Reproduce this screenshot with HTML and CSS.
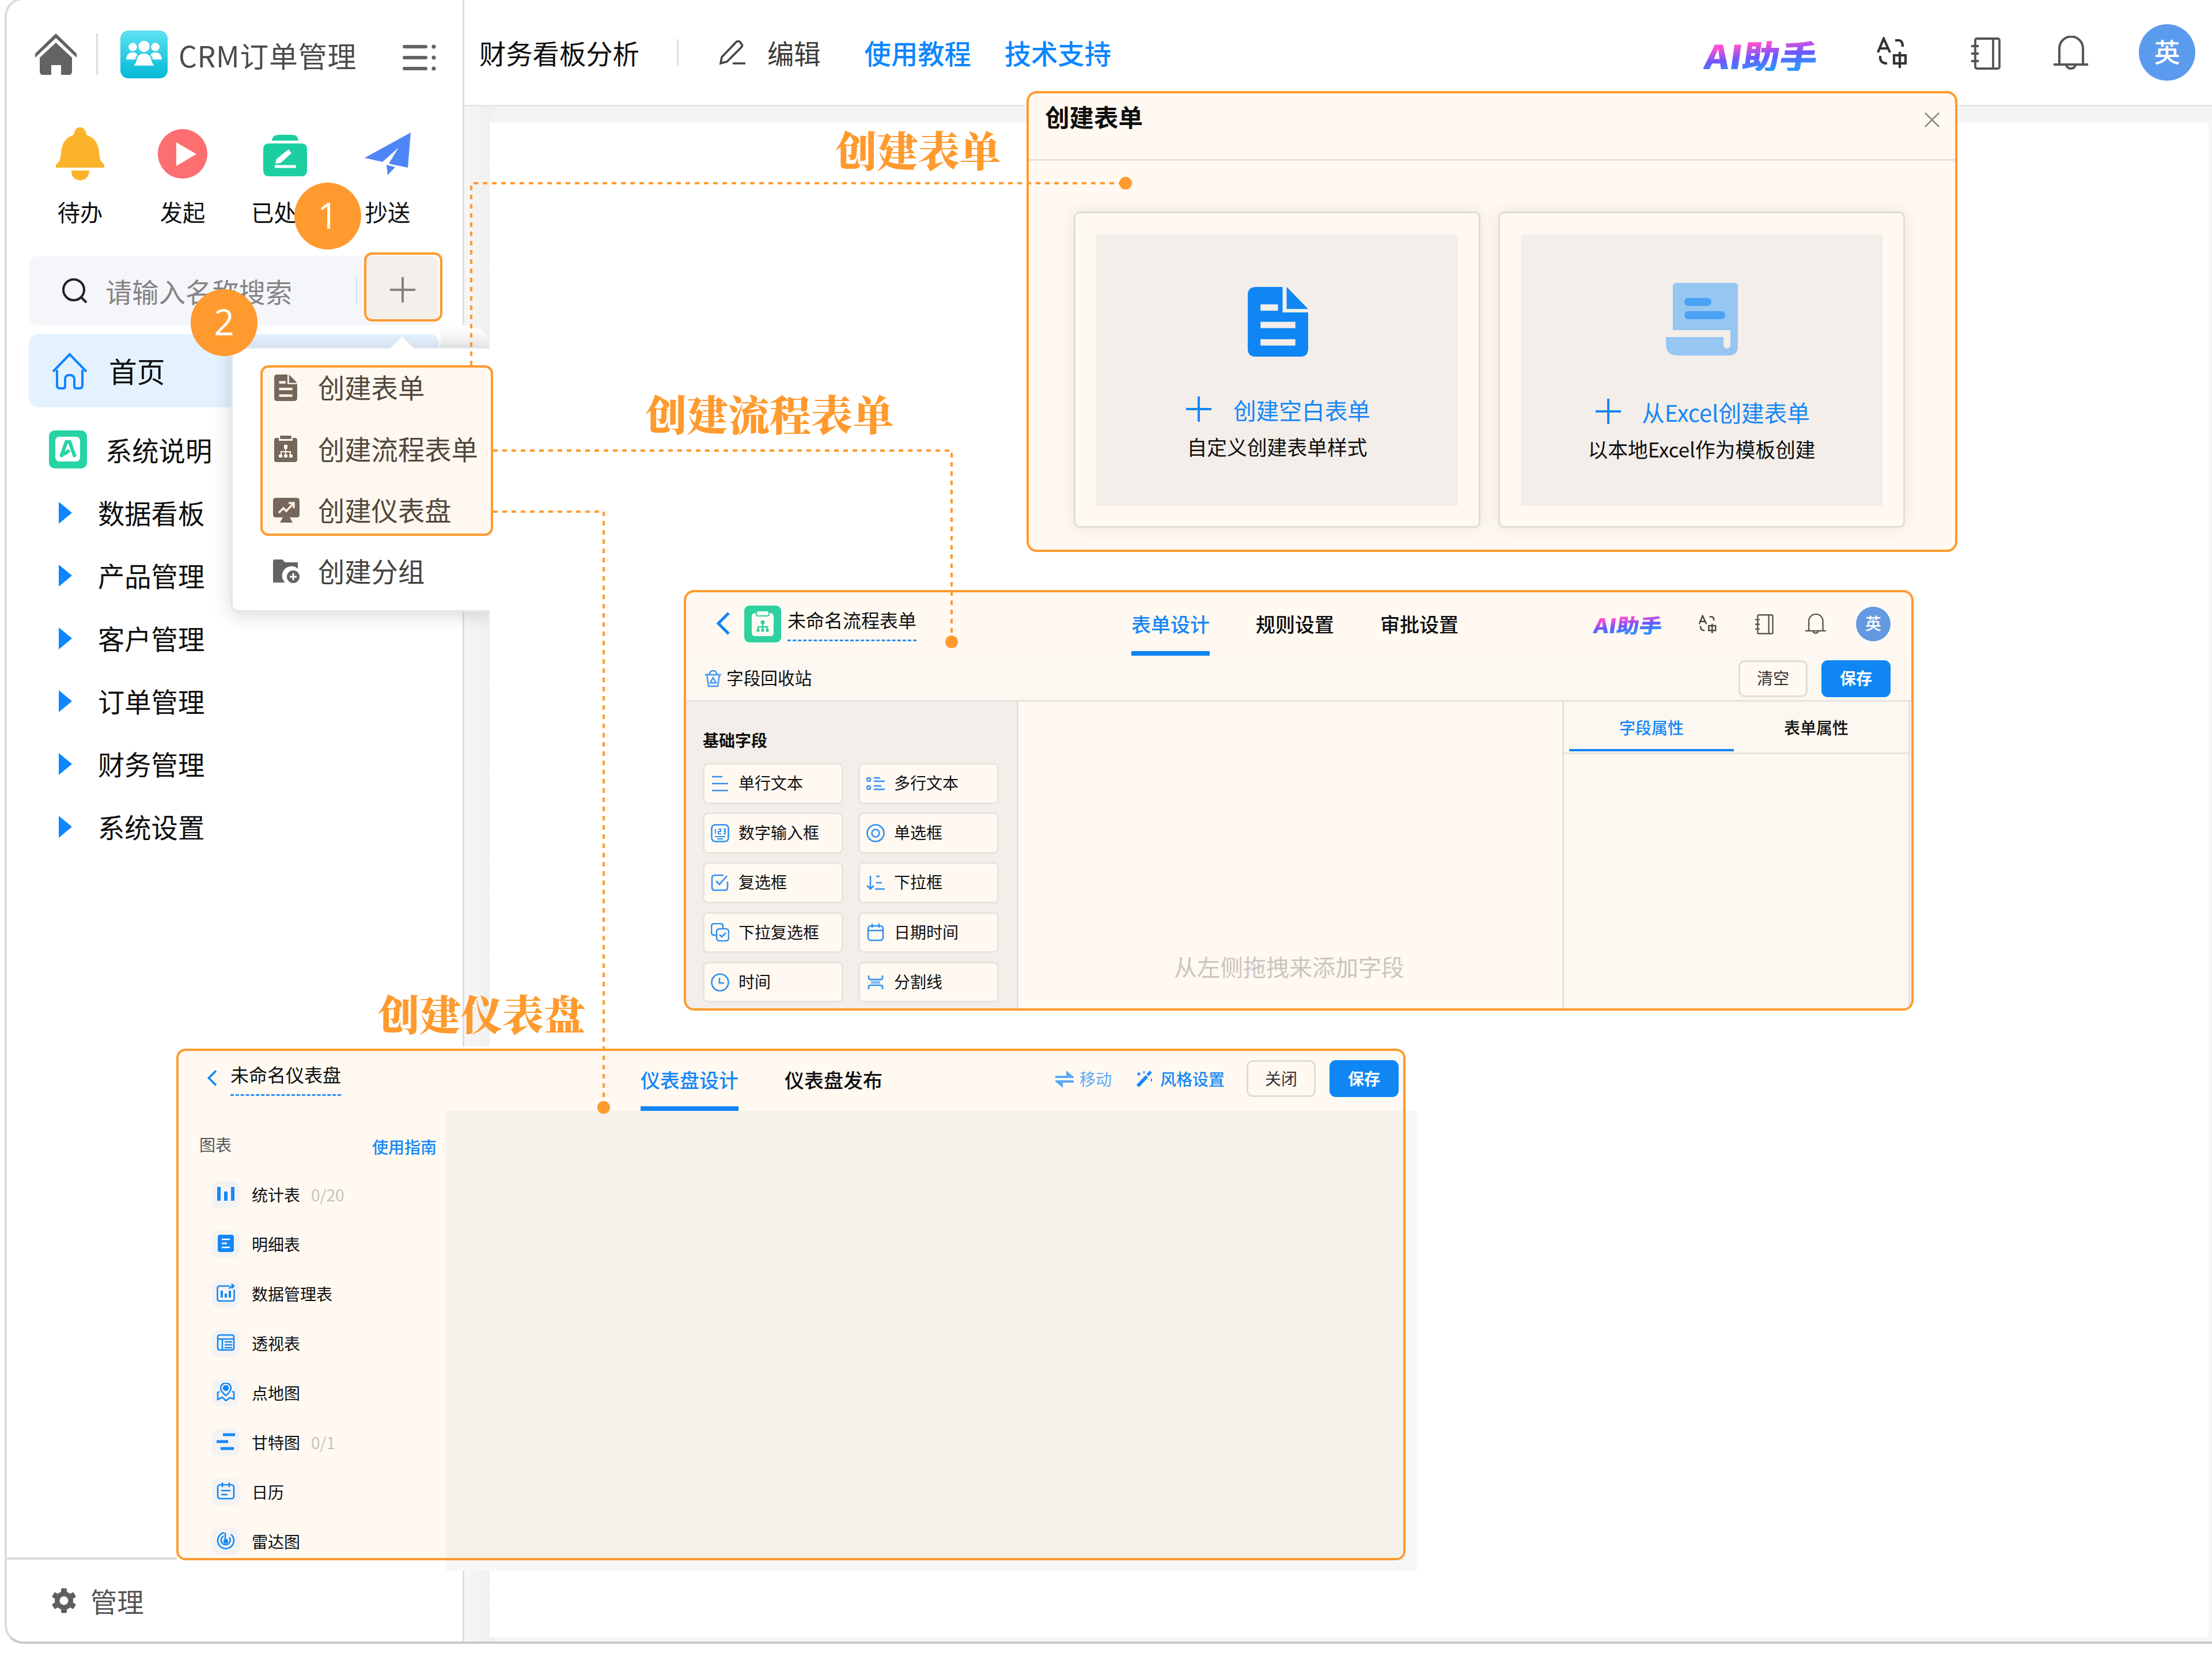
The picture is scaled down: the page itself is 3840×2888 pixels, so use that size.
FILE: index.html
```html
<!DOCTYPE html>
<html lang="zh-CN">
<head>
<meta charset="utf-8">
<title>CRM订单管理</title>
<link rel="stylesheet" href="styles.css">
</head>
<body>
<svg class="defs" width="0" height="0">
  <symbol id="i-home-solid" viewBox="0 0 72 72"><path d="M36 0 L72 35 V42 L36 8 L0 42 V35 Z"/><path d="M36 16 L64 42 V66 Q64 72 58 72 H45 V55 H28 V72 H14 Q8 72 8 66 V42 Z"/></symbol>
  <symbol id="i-list" viewBox="0 0 58 46"><path d="M3 4H40M3 23H40M3 42H40" stroke="currentColor" stroke-width="6" stroke-linecap="round"/><circle cx="54" cy="4" r="3.6"/><circle cx="54" cy="23" r="3.6"/><circle cx="54" cy="42" r="3.6"/></symbol>
  <symbol id="i-file" viewBox="0 0 104 120"><path fill-rule="evenodd" d="M14 0H60V44H104V106Q104 120 90 120H14Q0 120 0 106V14Q0 0 14 0ZM22 30V41H52V30ZM22 60V71H82V60ZM22 90V101H82V90Z"/><path d="M67 0L104 38H67Z"/></symbol>
  <symbol id="i-flow" viewBox="0 0 40 46"><path fill-rule="evenodd" d="M8 4V9H32V4H36Q40 4 40 8V42Q40 46 36 46H4Q0 46 0 42V8Q0 4 4 4ZM17 16V23H19V27H11V33H8V38H14V33H13V29H19V33H17V38H23V33H21V29H27V33H26V38H32V33H29V27H21V23H23V16Z"/><rect x="10" y="0" width="20" height="6" rx="2"/></symbol>
  <symbol id="i-board" viewBox="0 0 46 44"><path d="M5 0H41Q46 0 46 5V29Q46 34 41 34H29L34 43H12L17 34H5Q0 34 0 29V5Q0 0 5 0Z"/><path d="M10 26L18 18L23 23L35 10M27 9H36V18" fill="none" stroke="#fff9f2" stroke-width="3.4"/></symbol>
  <symbol id="i-folder" viewBox="0 0 46 42"><path d="M0 3Q0 0 3 0H16L21 5H43V16A14 14 0 0 0 21 40H0Z"/><circle cx="35" cy="30" r="11"/><path d="M35 24V36M29 30H41" stroke="#fff" stroke-width="3"/></symbol>
  <symbol id="i-translate" viewBox="0 0 52 54"><g fill="none" stroke="currentColor" stroke-width="4.2"><path d="M2 27L12 3L23 27M5 20H20"/><path d="M32 6H38Q45 6 45 17"/><path d="M6 33V37Q7 46 18 46"/><path d="M30 32H50V46H30ZM40 26V54"/></g></symbol>
  <symbol id="i-book" viewBox="0 0 52 56"><g fill="none" stroke="currentColor" stroke-width="3.8"><rect x="8" y="2" width="42" height="52" rx="3"/><path d="M39 2V54M1 15H14M1 28H14M1 41H14"/></g></symbol>
  <symbol id="i-bell" viewBox="0 0 60 62"><g fill="none" stroke="currentColor" stroke-width="4"><path d="M10 50V22A20 20 0 0 1 51 22V50M0 50H60M22 51A8.5 9 0 0 0 38 51"/></g></symbol>
  <symbol id="i-plus" viewBox="0 0 44 44"><path d="M22 0V44M0 22H44" stroke="currentColor" stroke-width="4"/></symbol>
  <symbol id="i-back" viewBox="0 0 24 40"><path d="M22 2L4 20L22 38" fill="none" stroke="currentColor" stroke-width="5"/></symbol>
</svg>

<div class="app">
  <aside class="sidebar">
    <header class="brand">
      <svg class="brand-home"><use href="#i-home-solid"/></svg>
      <span class="brand-line"></span>
      <span class="brand-logo"><svg viewBox="0 0 60 48" width="62" height="50" fill="#fff"><circle cx="11" cy="12" r="7"/><circle cx="49" cy="12" r="7"/><path d="M0 33Q1 21 11 21Q17 21 19 25Q16 28 15 33ZM60 33Q59 21 49 21Q43 21 41 25Q44 28 45 33Z"/><circle cx="30" cy="11" r="9.5"/><path d="M13 43Q17 39 18 32Q20 23 30 23Q40 23 42 32Q43 39 47 43Z"/></svg></span>
      <span class="brand-name">CRM订单管理</span>
      <svg class="brand-menu"><use href="#i-list"/></svg>
    </header>
    <nav class="quick">
      <a class="quick-item"><span class="quick-icon"><svg viewBox="0 0 86 92" width="86" height="92" fill="#fbb429"><path d="M43 0C50 0 53 6 54 13C68 18 75 28 76 44C77 57 79 59 85 65V70H1V65C7 59 9 57 10 44C11 28 18 18 32 13C33 6 36 0 43 0Z"/><path d="M28 75H59Q58 91 43 92Q28 91 28 75Z"/></svg></span>待办</a>
      <a class="quick-item"><span class="quick-icon"><svg viewBox="0 0 86 86" width="86" height="86"><circle cx="43" cy="43" r="43" fill="#fd6e71"/><path d="M32 23L67 43.500L32 64Z" fill="#fff"/></svg></span>发起</a>
      <a class="quick-item"><span class="quick-icon quick-low"><svg viewBox="0 0 76 72" width="76" height="72"><path d="M15 10Q16 0 26 0H50Q60 0 61 10ZM10 15H66Q76 15 76 25V62Q76 72 66 72H10Q0 72 0 62V25Q0 15 10 15Z" fill="#1ccfa0"/><path d="M20 55H57" stroke="#fff" stroke-width="5"/><path d="M44 25L49 32L30 49L21 50L23 42Z" fill="#fff"/></svg></span>已处理</a>
      <a class="quick-item"><span class="quick-icon"><svg viewBox="0 0 80 74" width="80" height="74" fill="#4e86f7"><path d="M80 0L75 61L42 54L59 26L31 51L0 44Z"/><path d="M38 56L53 60L40 74Z"/></svg></span>抄送</a>
    </nav>
    <div class="search">
      <svg viewBox="0 0 44 44" width="44" height="44"><circle cx="20" cy="20" r="18" fill="none" stroke="#222" stroke-width="4"/><path d="M32 32L42 42" stroke="#222" stroke-width="4"/></svg>
      <span class="search-text">请输入名称搜索</span>
      <span class="search-line"></span>
    </div>
    <a class="home-row">
      <svg viewBox="0 0 62 64" width="62" height="64" fill="none" stroke="#0d86ff" stroke-width="4"><path d="M2 33L31 3L60 33M9 30V57Q9 62 14 62H20Q23 62 23 58V46Q23 39 31 39Q39 39 39 46V58Q39 62 42 62H48Q53 62 53 57V30"/></svg>首页</a>
    <nav class="tree">
      <a class="tree-row tree-doc"><span class="doc-icon"><svg viewBox="0 0 66 66" width="66" height="66"><rect x="11" y="11" width="43" height="43" rx="7" fill="#fff"/><path d="M21 46L30 20H36L45 46M24 41Q31 40 35 34" fill="none" stroke="#26d3a5" stroke-width="6"/></svg></span>系统说明</a>
      <a class="tree-row"><i class="caret"></i>数据看板</a>
      <a class="tree-row"><i class="caret"></i>产品管理</a>
      <a class="tree-row"><i class="caret"></i>客户管理</a>
      <a class="tree-row"><i class="caret"></i>订单管理</a>
      <a class="tree-row"><i class="caret"></i>财务管理</a>
      <a class="tree-row"><i class="caret"></i>系统设置</a>
    </nav>
    <footer class="manage">
      <svg viewBox="-22 -22 44 44" width="44" height="44"><g fill="#5f5f5f"><circle r="16"/><rect x="-5" y="-21.500" width="10" height="43" rx="2"/><rect x="-5" y="-21.500" width="10" height="43" rx="2" transform="rotate(60)"/><rect x="-5" y="-21.500" width="10" height="43" rx="2" transform="rotate(120)"/></g><circle r="7.500" fill="#fff"/></svg>管理</footer>
  </aside>
  <main class="main">
    <header class="topbar">
      <span class="top-title">财务看板分析</span>
      <span class="top-line"></span>
      <svg class="top-pen" viewBox="0 0 46 44" width="46" height="44" fill="none" stroke="#444" stroke-width="3.600"><path d="M3 41L5 30L30 4Q33 1 37 4L39 7Q42 10 39 13L14 38L3 41ZM24 41H46"/></svg>
      <span class="top-edit">编辑</span>
      <a class="top-link top-guide">使用教程</a>
      <a class="top-link top-help">技术支持</a>
      <span class="ai">AI助手</span>
      <svg class="tool-translate"><use href="#i-translate"/></svg>
      <svg class="tool-book"><use href="#i-book"/></svg>
      <svg class="tool-bell"><use href="#i-bell"/></svg>
      <span class="avatar">英</span>
    </header>
    <div class="canvas"></div>
  </main>
</div>

<div class="tab-bump"></div>
<div class="menu">
  <svg class="menu-arrow" viewBox="0 0 44 22" width="44" height="22"><path d="M0 22L22 0L44 22Z" fill="#fff"/></svg>
  <a class="menu-row"><svg class="mi-doc"><use href="#i-file"/></svg>创建表单</a>
  <a class="menu-row"><svg class="mi-doc"><use href="#i-flow"/></svg>创建流程表单</a>
  <a class="menu-row"><svg class="mi-wide"><use href="#i-board"/></svg>创建仪表盘</a>
  <a class="menu-row menu-gray"><svg class="mi-wide"><use href="#i-folder"/></svg>创建分组</a>
</div>
<div class="mark mark-menu"></div>
<div class="mark mark-plus"><svg width="44" height="44"><use href="#i-plus"/></svg></div>
<span class="badge badge-1">1</span>
<span class="badge badge-2">2</span>

<section class="panel form-panel">
  <header class="form-head"><h2>创建表单</h2><svg viewBox="0 0 26 26" width="26" height="26"><path d="M1 1L25 25M25 1L1 25" stroke="#8d8983" stroke-width="2.600"/></svg></header>
  <div class="cards">
    <div class="card"><div class="card-in">
      <svg class="card-file"><use href="#i-file"/></svg>
      <p class="card-link"><svg width="44" height="44"><use href="#i-plus"/></svg>创建空白表单</p>
      <p class="card-desc">自定义创建表单样式</p>
    </div></div>
    <div class="card card-excel"><div class="card-in">
      <svg class="card-sheet" viewBox="0 0 125 126"><path d="M18 0H119Q125 0 125 6V110Q125 126 109 126H20Q0 126 0 106V94H100V108Q101 113 106 114Q112 113 112 108V82H12V6Q12 0 18 0Z" fill="#97c6f3"/><rect x="32" y="26" width="47" height="14" rx="7" fill="#4aa2f5"/><rect x="32" y="49" width="71" height="14" rx="7" fill="#4aa2f5"/></svg>
      <p class="card-link"><svg width="44" height="44"><use href="#i-plus"/></svg>从Excel创建表单</p>
      <p class="card-desc">以本地Excel作为模板创建</p>
    </div></div>
  </div>
</section>

<section class="panel flow-panel">
  <header class="flow-head">
    <svg class="flow-back"><use href="#i-back"/></svg>
    <span class="flow-logo"><svg viewBox="0 0 64 64" width="64" height="64"><path d="M19 13H45Q51 13 51 19V47Q51 53 45 53H19Q13 53 13 47V19Q13 13 19 13Z" fill="#fffaf2"/><rect x="21" y="9" width="22" height="9" rx="3" fill="#fffaf2" stroke="#2fd1a0" stroke-width="2"/><path d="M32 28V43M24 43V37H40V43" fill="none" stroke="#2fd1a0" stroke-width="2.600"/><circle cx="32" cy="29" r="3.500" fill="#2fd1a0"/><circle cx="24" cy="43" r="2.800" fill="#2fd1a0"/><circle cx="32" cy="43" r="2.800" fill="#2fd1a0"/><circle cx="40" cy="43" r="2.800" fill="#2fd1a0"/></svg></span>
    <span class="doc-name">未命名流程表单</span>
    <nav class="tabs flow-tabs"><a class="tab tab-on">表单设计</a><a class="tab">规则设置</a><a class="tab">审批设置</a></nav>
    <span class="ai ai-small">AI助手</span>
    <svg class="st-translate"><use href="#i-translate"/></svg>
    <svg class="st-book"><use href="#i-book"/></svg>
    <svg class="st-bell"><use href="#i-bell"/></svg>
    <span class="avatar avatar-small">英</span>
  </header>
  <div class="flow-tool">
    <svg viewBox="0 0 28 30" width="28" height="30" fill="none" stroke="#3f98f3" stroke-width="2.400"><path d="M0 8H28M3 8L6 28H22L25 8M7 8Q9 1 14 1Q19 1 21 8M14 13L19 22H9Z"/></svg>
    <span class="flow-recycle">字段回收站</span>
    <button class="btn">清空</button><button class="btn btn-blue">保存</button>
  </div>
  <div class="flow-body">
    <aside class="fields">
      <h3>基础字段</h3>
      <div class="field-grid">
        <span class="field"><svg viewBox="0 0 32 32"><path d="M2 4H20M2 16H30M2 28H30"/></svg>单行文本</span>
        <span class="field"><svg viewBox="0 0 32 32"><circle cx="4" cy="9" r="3"/><circle cx="4" cy="23" r="3"/><path d="M13 6H24M13 12H32M13 20H26M13 26H32"/></svg>多行文本</span>
        <span class="field"><svg viewBox="0 0 32 32"><rect x="1.500" y="1.500" width="29" height="29" rx="6"/><path d="M8 9V17M13 9H17V13H13V17H18M22 9H25V17H22M22 13H25M7 22H25M11 26H21" stroke-width="2"/></svg>数字输入框</span>
        <span class="field"><svg viewBox="0 0 32 32"><circle cx="16" cy="16" r="14.500"/><circle cx="16" cy="16" r="6.500"/></svg>单选框</span>
        <span class="field"><svg viewBox="0 0 32 32"><path d="M22 3H7Q2 3 2 8V24Q2 29 7 29H24Q29 29 29 24V14M9 13L15 19L28 4"/></svg>复选框</span>
        <span class="field"><svg viewBox="0 0 32 32"><path d="M7 4V27M1 21L7 27L13 21M17 5H23M17 16H27M15 27H32"/></svg>下拉框</span>
        <span class="field"><svg viewBox="0 0 32 32"><path d="M9 21H6Q1 21 1 16V6Q1 1 6 1H16Q21 1 21 6V9"/><rect x="10" y="10" width="21" height="21" rx="5"/><path d="M15 20L19 24L26 17"/></svg>下拉复选框</span>
        <span class="field"><svg viewBox="0 0 32 32"><rect x="3" y="5" width="26" height="25" rx="5"/><path d="M3 13H29M10 1V8M22 1V8"/></svg>日期时间</span>
        <span class="field"><svg viewBox="0 0 32 32"><circle cx="16" cy="16" r="14.500"/><path d="M15 8V17H23"/></svg>时间</span>
        <span class="field"><svg viewBox="0 0 32 32"><path d="M4 4V8Q4 11 7 11H25Q28 11 28 8V4M4 28V24Q4 21 7 21H25Q28 21 28 24V28"/><path d="M8 16H24" stroke-width="5" opacity=".6"/></svg>分割线</span>
      </div>
    </aside>
    <div class="drop">从左侧拖拽来添加字段</div>
    <aside class="props"><div class="prop-tabs"><a class="prop-on">字段属性</a><a>表单属性</a></div></aside>
  </div>
</section>

<div class="dash-base"></div>
<section class="panel dash-panel">
  <header class="dash-head">
    <svg class="dash-back"><use href="#i-back"/></svg>
    <span class="doc-name">未命名仪表盘</span>
    <nav class="tabs dash-tabs"><a class="tab tab-on">仪表盘设计</a><a class="tab">仪表盘发布</a></nav>
    <a class="dash-move"><svg viewBox="0 0 32 30" width="32" height="30"><path d="M0 9H19V0L32 11V13H0ZM32 21H13V30L0 19V17H32Z" fill="#5aa9f6"/></svg>移动</a>
    <a class="dash-style"><svg viewBox="0 0 30 30" width="30" height="30"><path d="M3 27L19 10" stroke="#1788f5" stroke-width="6"/><path d="M20 8L26 2" stroke="#1788f5" stroke-width="5"/><path d="M5 3V9M2 6H8M14 1V5M27 14V19" stroke="#1788f5" stroke-width="2"/></svg>风格设置</a>
    <button class="btn">关闭</button><button class="btn btn-blue">保存</button>
  </header>
  <div class="dash-body">
    <aside class="charts">
      <div class="charts-head"><span>图表</span><a>使用指南</a></div>
      <div class="chart"><span class="chart-icon"><svg viewBox="0 0 32 32"><path d="M4 4V28M16 12V28M28 4V28" stroke-width="6"/></svg></span>统计表<em>0/20</em></div>
      <div class="chart"><span class="chart-icon"><svg viewBox="0 0 32 32"><rect x="2" y="1" width="28" height="30" rx="4" fill="#1687f5" stroke="none"/><path d="M9 9H23M9 16H18M9 23H23" stroke="#fff"/></svg></span>明细表</div>
      <div class="chart"><span class="chart-icon"><svg viewBox="0 0 32 32"><path d="M22 4H5Q1.500 4 1.500 8V26Q1.500 30 5 30H27Q30.500 30 30.500 26V10M22 9Q23 4 29 4M26 0L30 4L26 8"/><path d="M9 12V24M16 17V24M23 12V24" stroke-width="4"/></svg></span>数据管理表</div>
      <div class="chart"><span class="chart-icon"><svg viewBox="0 0 32 32"><rect x="2" y="3" width="28" height="26" rx="3"/><path d="M2 10H30M10 10V29M14 15H27M14 20H27M14 25H27"/></svg></span>透视表</div>
      <div class="chart"><span class="chart-icon"><svg viewBox="0 0 32 32"><path d="M16 22Q7 15 7 9A9 8.500 0 0 1 25 9Q25 15 16 22ZM5 15L2 17V29L10 25L16 31L23 26L30 28V16L27 15"/><circle cx="16" cy="9" r="4" fill="#1687f5"/></svg></span>点地图</div>
      <div class="chart"><span class="chart-icon"><svg viewBox="0 0 32 32"><path d="M11 4H32M0 16H20M7 28H30" stroke-width="5"/></svg></span>甘特图<em>0/1</em></div>
      <div class="chart"><span class="chart-icon"><svg viewBox="0 0 32 32"><rect x="2" y="5" width="28" height="24" rx="4"/><path d="M10 1V9M22 1V9M8 15H24M8 22H19"/></svg></span>日历</div>
      <div class="chart"><span class="chart-icon"><svg viewBox="0 0 32 32"><path d="M13 2A14 14 0 1 0 25 5M15 2V15M12 8A8 8 0 1 0 22 10"/><circle cx="16" cy="17" r="3" fill="#1687f5"/></svg></span>雷达图</div>
    </aside>
    <div class="dash-canvas"></div>
  </div>
</section>

<svg class="wires" viewBox="0 0 3840 2888">
  <g fill="none" stroke="#ff9a2e" stroke-width="4" stroke-dasharray="8 8">
    <path d="M818 634V318H1946"/>
    <path d="M856 782H1652V1106"/>
    <path d="M856 888H1048V1914"/>
  </g>
  <g fill="#ff9a2e"><circle cx="1954" cy="318" r="11"/><circle cx="1652" cy="1114" r="11"/><circle cx="1048" cy="1922" r="11"/></g>
</svg>
<span class="note note-form">创建表单</span>
<span class="note note-flow">创建流程表单</span>
<span class="note note-dash">创建仪表盘</span>
</body>
</html>
```
FILE: styles.css
```css
* { box-sizing: border-box; }
body {
  margin: 0; width: 3840px; height: 2888px; position: relative; overflow: hidden;
  background: #fff; color: #0e0e0e;
  font-family: "Noto Sans CJK SC", "Noto Sans", sans-serif; font-size: 46.3px; line-height: 1.2;
}
h2, h3, p { margin: 0; }
svg { flex: none; display: block; }
svg:not([fill]) { fill: currentColor; }
.defs { position: absolute; }

/* application frame */
.app {
  display: flex; height: 2857px; margin: -4px 0 0 8px;
  border: 4px solid #dcdcdc; border-bottom-color: #cacaca; border-right: 0;
  border-radius: 32px 0 0 32px; overflow: hidden; background: #fff;
}
.sidebar { width: 794px; flex: none; border-right: 3px solid #dedede; display: flex; flex-direction: column; }
.brand { display: flex; align-items: center; height: 188px; padding: 0 46px 0 49px; color: #636363; }
.brand-home { width: 72px; height: 72px; }
.brand-line { width: 3px; height: 72px; margin-left: 34px; background: #dcdcdc; }
.brand-logo {
  width: 82px; height: 83px; margin-left: 39px; border-radius: 14px;
  background: linear-gradient(#5de2f3, #05b8d7); display: flex; align-items: center; justify-content: center;
}
.brand-name { margin: 2px 0 0 19px; font-size: 50px; letter-spacing: .7px; color: #4c4c4c; white-space: nowrap; }
.brand-menu { width: 58px; height: 46px; margin: 11px 0 0 auto; }

.quick { display: grid; grid-template-columns: repeat(4, 178px); padding: 30px 0 0 38px; }
.quick-item { display: flex; flex-direction: column; align-items: center; font-size: 39.3px; line-height: 56px; }
.quick-icon { height: 95px; margin-bottom: 26px; display: flex; align-items: center; padding-top: 2px; }
.quick-low { padding-top: 9px; }

.search { height: 119px; margin: 50px 42px 0 38px; padding: 0 0 0 58px; display: flex; align-items: center; background: #f5f6fa; border-radius: 14px; }
.search-text { margin-left: 31px; color: #848484; }
.search-line { width: 2px; height: 48px; margin-left: 111px; background: #dcdfe6; }

.home-row { height: 127px; margin: 16px 41px 0 38px; padding-left: 40px; display: flex; align-items: center; gap: 37px; font-size: 48.8px; background: #e4f2ff; border-radius: 16px; }
.tree { margin-top: 18px; }
.tree-row { height: 109px; display: flex; align-items: center; padding-left: 90px; }
.tree-doc { padding-left: 73px; gap: 32px; }
.doc-icon { border-radius: 10px; background: #26d3a5; }
.caret { border: 19px solid transparent; border-left: 23px solid #0d86ff; border-right: 0; margin: 3px 45px 0 0; }
.manage { height: 146px; margin-top: auto; padding-left: 77px; display: flex; align-items: center; gap: 24px; color: #555; border-top: 4px solid #dedede; }

.main { flex: 1; display: flex; flex-direction: column; background: linear-gradient(90deg, #f7f7f7, #f0f0f0 43px, #f5f5f5 60px); }
.topbar { height: 185px; flex: none; display: flex; align-items: center; padding: 0 29px 0 26px; background: #fff; border-bottom: 3px solid #e6e6e6; white-space: nowrap; }
.top-title { width: 278px; }
.top-line { width: 3px; height: 46px; margin-left: 65px; background: #dcdfe6; }
.top-pen { margin-left: 70px; }
.top-edit { margin-left: 38px; color: #3c3c3c; }
.top-link { color: #0d86ff; font-weight: 500; }
.top-guide { margin-left: 76px; }
.top-help { margin-left: 58px; }
.ai {
  width: 200px; margin: 7px -3px 0 auto; font-size: 65px; font-weight: 900; line-height: 64px; white-space: nowrap;
  color: transparent; background: linear-gradient(172deg, #ff4fd2 24%, #6a58ff 54%, #2f93ff 82%);
  -webkit-background-clip: text; background-clip: text; transform: skewX(-8deg) scaleY(.88);
}
.tool-translate { width: 52px; height: 54px; margin-left: 101px; color: #333; }
.tool-book { width: 52px; height: 56px; margin-left: 111px; margin-top: 4px; color: #555; }
.tool-bell { width: 60px; height: 62px; margin-left: 92px; margin-top: 4px; color: #555; }
.avatar { width: 98px; height: 98px; margin-left: 88px; border-radius: 50%; background: #5b9bee; color: #fff; font-size: 45px; font-weight: 500; line-height: 94px; text-align: center; }
.canvas { flex: 1; margin: 27px 6px 8px 44px; background: #fff; }

/* create menu */
.tab-bump { position: absolute; left: 765px; top: 564px; width: 85px; height: 44px; background: linear-gradient(#fff, #efefef); border-radius: 0 48px 0 0 / 0 30px 0 0; }
.menu {
  position: absolute; left: 401px; top: 602px; width: 449px; height: 460px; padding: 13px 0 0 72px;
  background: #fff; border: 3px solid #e2e6ee; border-right: 0; border-radius: 12px 0 0 12px;
  box-shadow: 0 4px 34px rgba(0, 0, 0, .17); clip-path: inset(-40px 0 -60px -60px);
}
.menu-arrow { position: absolute; left: 272px; top: -21px; }
.menu-row { height: 106.3px; display: flex; align-items: center; color: #45423e; white-space: nowrap; }
.menu-row svg { color: #6b645d; margin-top: 4px; }
.menu-gray svg { color: #636363; }
.mi-doc { width: 40px; height: 46px; margin-right: 36px; }
.mi-wide { width: 46px; height: 44px; margin-right: 32px; margin-left: -2px; }

/* orange callouts */
.mark { position: absolute; border: 4px solid #ff9a2e; border-radius: 14px; background: rgba(255, 154, 46, .07); }
.mark-menu { left: 452px; top: 634px; width: 404px; height: 296px; }
.mark-plus { left: 632px; top: 438px; width: 136px; height: 120px; padding: 9px 3px 0 0; display: flex; align-items: center; justify-content: center; color: #85817d; }
.badge { position: absolute; width: 116px; height: 116px; border-radius: 50%; background: #ff9a2e; color: #fff; font: 62px/113px "Open Sans", "Noto Sans", sans-serif; text-align: center; }
.badge-1 { left: 511px; top: 317px; }
.badge-2 { left: 331px; top: 502px; }
.wires { position: absolute; left: 0; top: 0; width: 3840px; height: 2888px; }
.note { position: absolute; color: #ff9a2e; font: 900 72px/100px "Noto Serif CJK SC", "Source Han Serif SC", "Noto Sans CJK SC", serif; white-space: nowrap; }
.note-form { left: 1450px; top: 208px; }
.note-flow { left: 1120px; top: 666px; }
.note-dash { left: 656px; top: 1707px; }

.panel { position: absolute; background: #fff9f2; border: 4px solid #ff9a2e; border-radius: 18px; overflow: hidden; white-space: nowrap; }
.btn { width: 120px; height: 64px; padding: 0 0 3px; border: 3px solid #e0dcd7; border-radius: 11px; background: #fff9f2; color: #333; font: 28px/1 "Noto Sans CJK SC", sans-serif; }
.btn-blue { margin-left: 24px; border-color: #0f86f3; background: #0f86f3; color: #fff; font-weight: 700; }
.doc-name { height: 53px; font-size: 32px; line-height: 31px; border-bottom: 3px dashed #2b8ff5; }
.tabs { display: flex; align-self: stretch; }
.tab { font-size: 34px; font-weight: 500; border-bottom: 8px solid transparent; }
.tab-on { color: #1687f5; border-color: #0f86f3; }

/* blank form dialog */
.form-panel { left: 1782px; top: 158px; width: 1616px; height: 800px; }
.form-head { height: 117px; padding: 12px 27px 0 28px; display: flex; justify-content: space-between; border-bottom: 3px solid #e8e3dd; }
.form-head h2 { font-size: 42.5px; line-height: 56px; font-weight: 700; }
.form-head svg { margin-top: 21px; }
.cards { display: flex; gap: 31px; padding: 88px 0 0 78px; }
.card { width: 706px; height: 549px; padding: 37px 36px; border: 3px solid #e0dcd9; border-radius: 10px; background: #fff9f2; box-shadow: 0 0 26px rgba(90, 70, 40, .12); }
.card-in { height: 471px; background: #f3eeea; display: flex; flex-direction: column; align-items: center; }
.card-file { width: 105px; height: 121px; margin: 91px 0 0 2px; color: #0f86f3; }
.card-sheet { width: 125px; height: 126px; margin-top: 84px; }
.card-link { display: flex; align-items: center; gap: 38px; height: 50px; margin: 67px 0 0 4px; font-size: 39.7px; color: #1687f5; }
.card-link svg { margin-top: -2px; }
.card-excel .card-link { margin-top: 73px; gap: 36px; }
.card-desc { margin-top: 18px; font-size: 34.8px; line-height: 42px; }

/* flow form designer */
.flow-panel { left: 1187px; top: 1024px; width: 2135px; height: 730px; }
.flow-head { height: 110px; display: flex; align-items: center; padding: 0 36px 0 52px; }
.flow-back { width: 24px; height: 40px; color: #0f86f3; margin-top: -2px; }
.flow-logo { margin: -1px 11px 0 25px; border-radius: 9px; background: #2fd1a0; }
.flow-head .doc-name { margin-top: 7px; width: 224px; }
.flow-tabs { margin-left: 373px; gap: 80px; }
.flow-tabs .tab { line-height: 110px; height: 110px; }
.ai-small { width: 121px; margin: 2px -2px 0 auto; font-size: 39.5px; line-height: 40px; }
.st-translate { width: 34px; height: 32px; margin-left: 61px; color: #4b4640; }
.st-book { width: 33px; height: 35px; margin-left: 65px; color: #5b554f; }
.st-bell { width: 36px; height: 37px; margin-left: 55px; color: #5b554f; }
.avatar-small { width: 60px; height: 60px; margin-left: 52px; font-size: 28px; line-height: 56px; background: #6399e0; }
.flow-tool { height: 80px; display: flex; align-items: center; padding: 2px 36px 0 33px; background: #fcf7f0; border-bottom: 3px solid #e8e3dd; }
.flow-recycle { margin: -3px auto 0 9px; font-size: 29.7px; }
.flow-body { display: flex; height: 532px; }
.fields { width: 577px; padding: 46px 0 0 29px; background: #f3eeea; border-right: 3px solid #e5e0db; }
.fields h3 { font-size: 28px; line-height: 40px; font-weight: 700; }
.field-grid { display: grid; grid-template-columns: 244px 244px; grid-auto-rows: 71.500px; gap: 14.700px 26px; margin-top: 20px; }
.field { display: flex; align-items: center; gap: 16px; padding: 0 0 2px 11px; font-size: 28px; background: #fff9f2; border: 3px solid #e8e3dd; border-radius: 9px; }
.field svg { width: 32px; height: 32px; margin-top: 2px; fill: none; stroke: #2f90f4; stroke-width: 2.6; }
.drop { width: 944px; padding: 434px 4px 0 0; text-align: center; font-size: 40px; line-height: 50px; color: #cac5bf; }
.props { flex: 1; margin-right: 2px; background: #fcf7f0; border-left: 3px solid #e5e0db; border-right: 3px solid #e5e0db; }
.prop-tabs { display: flex; height: 91px; padding-left: 9px; border-bottom: 3px solid #e8e3dd; font-size: 28px; font-weight: 500; line-height: 88px; text-align: center; }
.prop-tabs a { width: 286px; height: 86px; }
.prop-tabs .prop-on { color: #1687f5; border-bottom: 4px solid #0f86f3; }

/* dashboard designer */
.dash-base { position: absolute; left: 307px; top: 1816px; width: 2153px; height: 910px; background: linear-gradient(#fff 112px, transparent 112px), linear-gradient(90deg, #fff 467px, #f7f7f7 467px); }
.dash-panel { left: 306px; top: 1820px; width: 2134px; height: 888px; border-radius: 16px; }
.dash-head { height: 104px; display: flex; align-items: center; padding: 0 8px 0 49px; }
.dash-back { width: 18px; height: 28px; color: #0f86f3; margin-top: -10px; }
.dash-head .doc-name { width: 192px; margin: -2px 0 0 23px; }
.dash-tabs { margin-left: 520px; gap: 80px; }
.dash-tabs .tab { height: 104px; line-height: 100px; }
.dash-move, .dash-style { display: flex; align-items: center; gap: 10px; font-size: 28px; color: #5aa9f6; margin-top: -7px; }
.dash-move { margin-left: auto; }
.dash-style { margin-left: 42px; gap: 12px; color: #1687f5; font-weight: 500; }
.dash-head .btn { margin-left: 38px; margin-top: -8px; }
.dash-head .btn-blue { margin-left: 24px; }
.dash-body { display: flex; height: 776px; }
.charts { width: 464px; padding-top: 36px; }
.charts-head { display: flex; justify-content: space-between; padding: 0 16px 0 36px; font-size: 28px; line-height: 44px; color: #555; }
.charts-head a { color: #1687f5; font-weight: 500; padding-top: 4px; }
.chart { height: 48px; margin-bottom: 38px; display: flex; align-items: center; padding-left: 58px; font-size: 28px; line-height: 48px; }
.charts-head + .chart { margin-top: 37px; }
.chart-icon { width: 48px; height: 47px; margin-right: 21px; border-radius: 11px; background: #f4f3f3; display: flex; align-items: center; justify-content: center; }
.chart-icon svg { width: 32px; height: 32px; margin-top: -2px; fill: none; stroke: #1687f5; stroke-width: 2.6; }
.chart em { margin-left: 19px; font-style: normal; color: #c6c2bf; }
.dash-canvas { flex: 1; background: #f6f1ea; }
```
